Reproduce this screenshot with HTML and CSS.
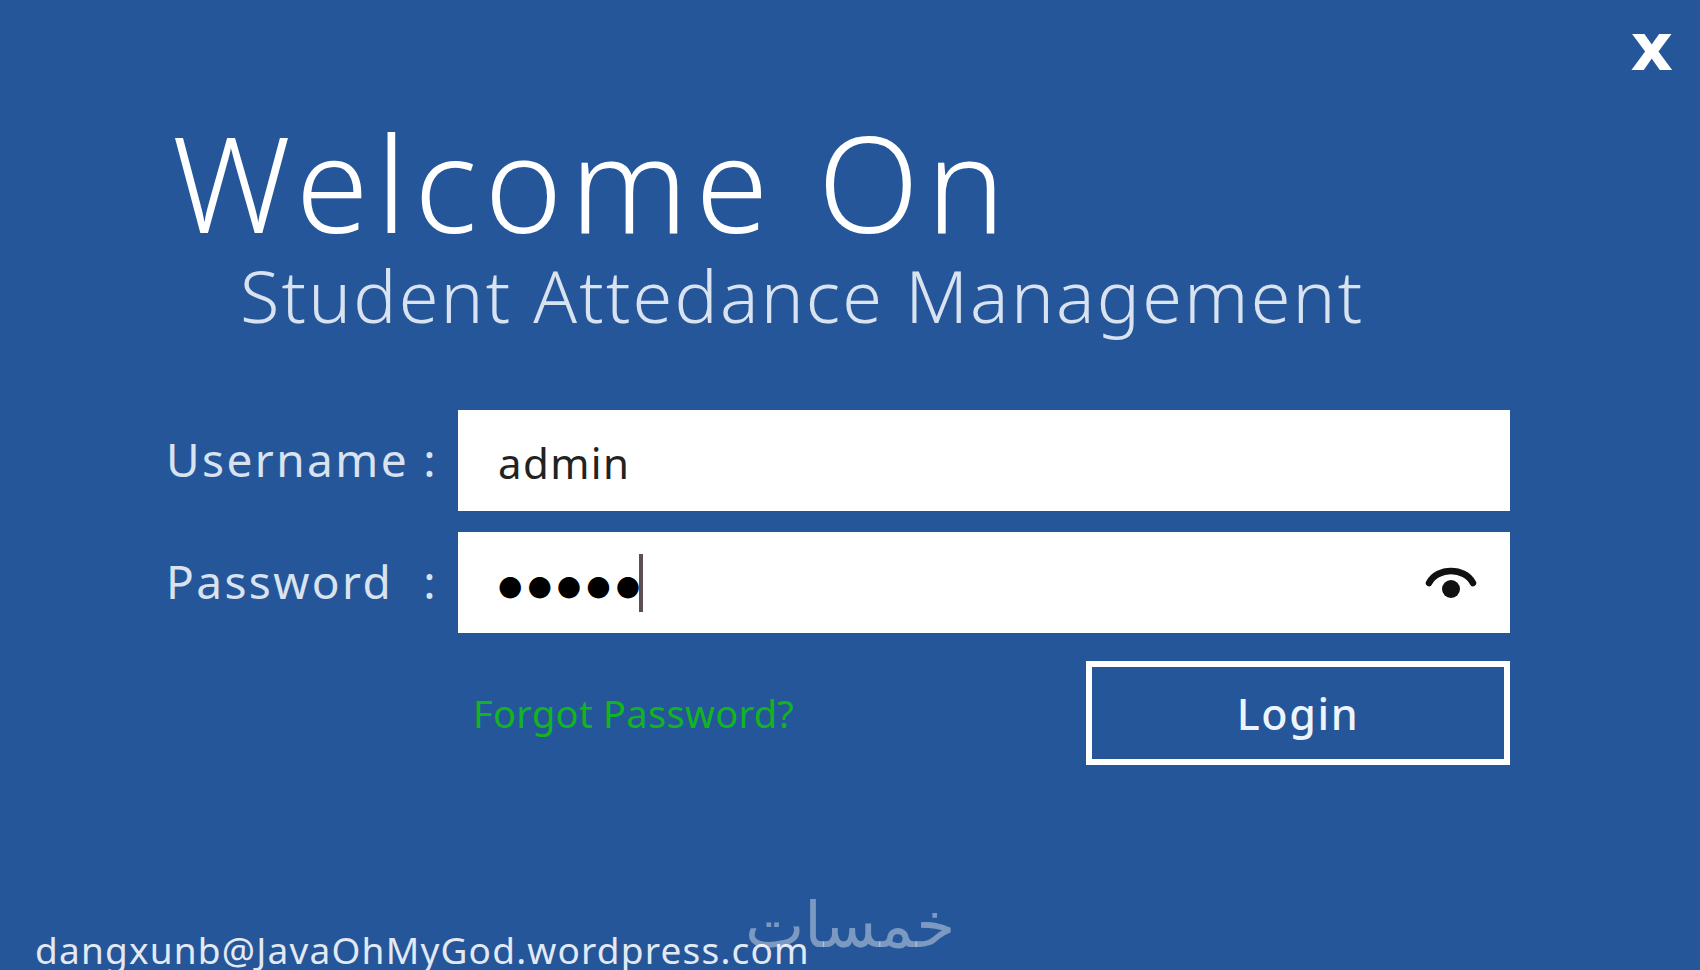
FILE: index.html
```html
<!DOCTYPE html>
<html lang="en">
<head>
    <meta charset="UTF-8">
    <title>Student Attedance Management</title>
    <link rel="stylesheet" href="styles.css">
</head>
<body>
    <div class="window">
        <div class="top-bar">
            <span class="close">x</span>
        </div>

        <h1 class="title">Welcome On</h1>
        <h2 class="subtitle">Student Attedance Management</h2>

        <div class="form">
            <div class="label">Username :</div>
            <div class="field"><span class="value">admin</span></div>

            <div class="label label-password"><span>Password</span><span>:</span></div>
            <div class="field">
                <span class="dots">●●●●●</span><span class="caret"></span>
                <svg class="eye" width="56" height="36" viewBox="0 0 56 36">
                    <path d="M6 18 C14 2 42 2 50 18" fill="none" stroke="#111" stroke-width="6.5" stroke-linecap="round"/>
                    <circle cx="28" cy="24" r="9" fill="#111"/>
                </svg>
            </div>

            <div class="actions">
                <span class="forgot">Forgot Password?</span>
                <button class="login">Login</button>
            </div>
        </div>

        <div class="footer">
            <span class="email">dangxunb@JavaOhMyGod.wordpress.com</span>
            <span class="watermark" lang="ar" dir="rtl">خمسات</span>
        </div>
    </div>
</body>
</html>
```

FILE: styles.css
```css
body {
    margin: 0;
    background-color: #25569a;
    font-family: "Noto Sans", "Liberation Sans", sans-serif;
    overflow: hidden;
}

.window {
    height: 970px;
    display: flex;
    flex-direction: column;
    color: white;
}

.top-bar {
    height: 115px;
    display: flex;
    justify-content: flex-end;
    padding-right: 27px;
}

.close {
    font-family: "DejaVu Sans", sans-serif;
    font-weight: bold;
    font-size: 66px;
    line-height: 96px;
}

.title {
    margin: 0 0 0 172px;
    font-size: 132px;
    font-weight: 300;
    line-height: 135px;
    letter-spacing: 7.5px;
}

.subtitle {
    margin: 0 0 0 240px;
    font-size: 72px;
    font-weight: 300;
    line-height: 90px;
    letter-spacing: 2.2px;
    color: #d9e3f0;
}

.form {
    margin: 70px 0 0 166px;
    width: 1344px;
    display: grid;
    grid-template-columns: 292px 1052px;
    row-gap: 21px;
    align-items: center;
}

.label {
    font-size: 46px;
    letter-spacing: 2.4px;
    padding-bottom: 4px;
    color: #d9e3f0;
}

.label-password {
    display: flex;
    justify-content: space-between;
    padding-right: 20px;
}

.field {
    height: 101px;
    background: white;
    color: #222;
    font-size: 42px;
    padding-left: 40px;
    display: flex;
    align-items: center;
}

.value {
    padding-top: 3px;
    letter-spacing: 1.4px;
}

.dots {
    padding-top: 6px;
    font-family: "DejaVu Sans", sans-serif;
    font-size: 28px;
    letter-spacing: 5px;
    color: black;
}

.caret {
    width: 4px;
    height: 58px;
    background: #5b4f55;
    margin-left: -6px;
}

.eye {
    margin-left: auto;
    margin-right: 31px;
}

.actions {
    grid-column: 2;
    display: flex;
    justify-content: space-between;
    align-items: center;
    padding-left: 15px;
    margin-top: 7px;
}

.forgot {
    font-size: 38px;
    letter-spacing: 0.3px;
    color: #12b41f;
}

.login {
    width: 424px;
    height: 104px;
    background: transparent;
    border: 6px solid white;
    color: #eef4fb;
    font-family: inherit;
    font-size: 43px;
    font-weight: 500;
    letter-spacing: 1.6px;
}

.footer {
    margin-top: auto;
    padding-left: 35px;
    display: flex;
    align-items: flex-end;
    height: 70px;
    position: relative;
}

.email {
    font-size: 37px;
    line-height: 40px;
    letter-spacing: 1.2px;
    color: #e3e9f2;
}

.watermark {
    position: absolute;
    left: 745px;
    bottom: 4px;
    font-family: "DejaVu Sans", sans-serif;
    font-size: 63px;
    line-height: 80px;
    color: rgba(255, 255, 255, 0.4);
}
```
